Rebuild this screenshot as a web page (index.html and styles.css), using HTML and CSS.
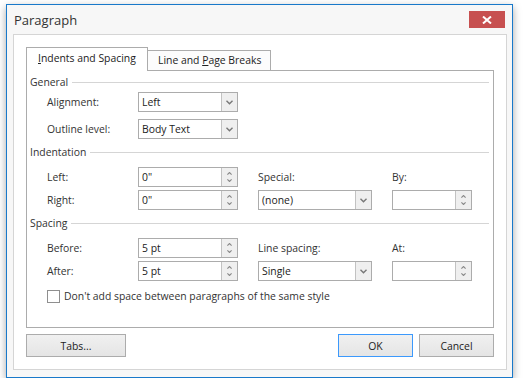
FILE: index.html
```html
<!DOCTYPE html>
<html lang="en">
<head>
    <meta charset="UTF-8">
    <title>Paragraph</title>
    <link rel="stylesheet" href="styles.css">
</head>
<body>
    <div class="window">
        <div class="titlebar">
            <span class="title">Paragraph</span>
            <button class="close-btn" aria-label="Close">
                <svg width="10" height="8" viewBox="0 0 10 8"><path d="M1 0.5 L9 7.5 M9 0.5 L1 7.5" stroke="#fff" stroke-width="2"/></svg>
            </button>
        </div>

        <div class="panel">
            <div class="tabs">
                <div class="tab active"><u>I</u>ndents and Spacing</div>
                <div class="tab">Line and <u>P</u>age Breaks</div>
            </div>

            <div class="tab-page">
                <div class="group-title"><span>General</span></div>
                <div class="grid two">
                    <label class="lbl">Alignment:</label>
                    <div class="combo"><span class="val">Left</span><span class="drop"><svg width="7" height="5" viewBox="0 0 7 5"><path d="M0.5 0.8 L3.5 3.8 L6.5 0.8" fill="none" stroke="#777" stroke-width="1.4"/></svg></span></div>
                    <label class="lbl">Outline level:</label>
                    <div class="combo"><span class="val">Body Text</span><span class="drop"><svg width="7" height="5" viewBox="0 0 7 5"><path d="M0.5 0.8 L3.5 3.8 L6.5 0.8" fill="none" stroke="#777" stroke-width="1.4"/></svg></span></div>
                </div>

                <div class="group-title"><span>Indentation</span></div>
                <div class="grid tight">
                    <label class="lbl">Left:</label>
                    <div class="spin"><span class="val">0"</span><span class="arrows"><svg width="5" height="3" viewBox="0 0 5 3"><path d="M0.4 2.6 L2.5 0.5 L4.6 2.6" fill="none" stroke="#888" stroke-width="1.1"/></svg><svg width="5" height="3" viewBox="0 0 5 3"><path d="M0.4 0.4 L2.5 2.5 L4.6 0.4" fill="none" stroke="#888" stroke-width="1.1"/></svg></span></div>
                    <span></span>
                    <label class="lbl">Special:</label>
                    <span></span>
                    <label class="lbl">By:</label>

                    <label class="lbl">Right:</label>
                    <div class="spin"><span class="val">0"</span><span class="arrows"><svg width="5" height="3" viewBox="0 0 5 3"><path d="M0.4 2.6 L2.5 0.5 L4.6 2.6" fill="none" stroke="#888" stroke-width="1.1"/></svg><svg width="5" height="3" viewBox="0 0 5 3"><path d="M0.4 0.4 L2.5 2.5 L4.6 0.4" fill="none" stroke="#888" stroke-width="1.1"/></svg></span></div>
                    <span></span>
                    <div class="combo"><span class="val">(none)</span><span class="drop"><svg width="7" height="5" viewBox="0 0 7 5"><path d="M0.5 0.8 L3.5 3.8 L6.5 0.8" fill="none" stroke="#777" stroke-width="1.4"/></svg></span></div>
                    <span></span>
                    <div class="spin"><span class="val"></span><span class="arrows"><svg width="5" height="3" viewBox="0 0 5 3"><path d="M0.4 2.6 L2.5 0.5 L4.6 2.6" fill="none" stroke="#888" stroke-width="1.1"/></svg><svg width="5" height="3" viewBox="0 0 5 3"><path d="M0.4 0.4 L2.5 2.5 L4.6 0.4" fill="none" stroke="#888" stroke-width="1.1"/></svg></span></div>
                </div>

                <div class="group-title"><span>Spacing</span></div>
                <div class="grid tight">
                    <label class="lbl">Before:</label>
                    <div class="spin"><span class="val">5 pt</span><span class="arrows"><svg width="5" height="3" viewBox="0 0 5 3"><path d="M0.4 2.6 L2.5 0.5 L4.6 2.6" fill="none" stroke="#888" stroke-width="1.1"/></svg><svg width="5" height="3" viewBox="0 0 5 3"><path d="M0.4 0.4 L2.5 2.5 L4.6 0.4" fill="none" stroke="#888" stroke-width="1.1"/></svg></span></div>
                    <span></span>
                    <label class="lbl">Line spacing:</label>
                    <span></span>
                    <label class="lbl">At:</label>

                    <label class="lbl">After:</label>
                    <div class="spin"><span class="val">5 pt</span><span class="arrows"><svg width="5" height="3" viewBox="0 0 5 3"><path d="M0.4 2.6 L2.5 0.5 L4.6 2.6" fill="none" stroke="#888" stroke-width="1.1"/></svg><svg width="5" height="3" viewBox="0 0 5 3"><path d="M0.4 0.4 L2.5 2.5 L4.6 0.4" fill="none" stroke="#888" stroke-width="1.1"/></svg></span></div>
                    <span></span>
                    <div class="combo"><span class="val">Single</span><span class="drop"><svg width="7" height="5" viewBox="0 0 7 5"><path d="M0.5 0.8 L3.5 3.8 L6.5 0.8" fill="none" stroke="#777" stroke-width="1.4"/></svg></span></div>
                    <span></span>
                    <div class="spin"><span class="val"></span><span class="arrows"><svg width="5" height="3" viewBox="0 0 5 3"><path d="M0.4 2.6 L2.5 0.5 L4.6 2.6" fill="none" stroke="#888" stroke-width="1.1"/></svg><svg width="5" height="3" viewBox="0 0 5 3"><path d="M0.4 0.4 L2.5 2.5 L4.6 0.4" fill="none" stroke="#888" stroke-width="1.1"/></svg></span></div>
                </div>

                <div class="check-row">
                    <span class="checkbox"></span>
                    <span>Don't add space between paragraphs of the same style</span>
                </div>
            </div>

            <div class="footer">
                <button class="btn">Tabs...</button>
                <span class="spacer"></span>
                <button class="btn ok">OK</button>
                <button class="btn">Cancel</button>
            </div>
        </div>
    </div>
</body>
</html>
```

FILE: styles.css
```css
body {
    margin: 0;
    background-color: #fff;
    font-family: "Open Sans", "Noto Sans", sans-serif;
    font-size: 10.4px;
    color: #222;
}
.window {
    box-sizing: border-box;
    width: 507px;
    height: 374px;
    margin: 4px 0 0 6px;
    border: 1px solid #1979ca;
    background-color: #f7f7f7;
    box-shadow: 0 3px 8px rgba(0, 0, 0, 0.35);
}
.titlebar {
    display: flex;
    align-items: flex-start;
    height: 29px;
}
.title {
    font-size: 13px;
    color: #333;
    padding: 6px 0 0 7px;
    line-height: 18px;
}
.close-btn {
    margin: 6px 7px 0 auto;
    width: 36px;
    height: 17px;
    padding: 0;
    border: none;
    background-color: #c75050;
    display: flex;
    align-items: center;
    justify-content: center;
}
.panel {
    box-sizing: border-box;
    height: 336px;
    margin: 0 5px 0 6px;
    padding: 12px;
    border: 1px solid #d5d5d5;
    background-color: #fff;
}
.tabs {
    display: flex;
    align-items: flex-end;
    height: 23px;
}
.tab {
    box-sizing: border-box;
    height: 20px;
    width: 123px;
    padding-left: 10px;
    border: 1px solid #acacac;
    border-left: none;
    border-bottom: none;
    background-color: #fcfcfc;
    line-height: 19px;
}
.tab.active {
    position: relative;
    width: 122px;
    height: 24px;
    margin-bottom: -1px;
    padding-left: 11px;
    border-left: 1px solid #acacac;
    background-color: #fff;
    line-height: 21px;
}
.tab-page {
    box-sizing: border-box;
    height: 258px;
    padding: 4px 4px 0 3px;
    border: 1px solid #acacac;
}
.group-title {
    display: flex;
    align-items: center;
    height: 14px;
    margin-top: 6px;
    color: #333;
}
.group-title:first-child {
    margin-top: 0;
}
.group-title::after {
    content: "";
    flex: 1;
    height: 1px;
    margin-left: 4px;
    background-color: #d5d5d5;
}
.grid {
    display: grid;
    grid-template-columns: 91px 100px 20px 114px 20px 80px;
    grid-template-rows: 20px 20px;
    row-gap: 7px;
    margin: 3px 0 0 17px;
}
.grid.two {
    grid-template-columns: 91px 100px;
}
.grid.tight {
    row-gap: 3px;
    margin-top: 8px;
}
.lbl {
    display: flex;
    align-items: center;
    color: #333;
}
.combo, .spin {
    box-sizing: border-box;
    display: flex;
    border: 1px solid #acacac;
    background-color: #fff;
}
.val {
    flex: 1;
    padding-left: 3px;
    line-height: 18px;
    color: #222;
}
.drop, .arrows {
    box-sizing: border-box;
    width: 16px;
    border-left: 1px solid #c2c2c2;
    background-color: #efefef;
    display: flex;
    align-items: center;
    justify-content: center;
}
.arrows {
    flex-direction: column;
    gap: 4px;
}
.check-row {
    display: flex;
    align-items: center;
    gap: 4px;
    margin: 8px 0 0 17px;
    color: #333;
}
.checkbox {
    box-sizing: border-box;
    width: 13px;
    height: 13px;
    border: 1px solid #8f8f8f;
    background-color: #fff;
}
.footer {
    display: flex;
    gap: 6px;
    margin-top: 6px;
}
.spacer {
    flex: 1;
}
.btn {
    box-sizing: border-box;
    width: 100px;
    height: 23px;
    padding: 0;
    border: 1px solid #acacac;
    background: linear-gradient(#f0f0f0, #e5e5e5);
    font-family: inherit;
    font-size: 10.4px;
    color: #222;
}
.btn.ok {
    width: 75px;
    border-color: #3c99fc;
}
.footer .btn:last-child {
    width: 75px;
}
```
